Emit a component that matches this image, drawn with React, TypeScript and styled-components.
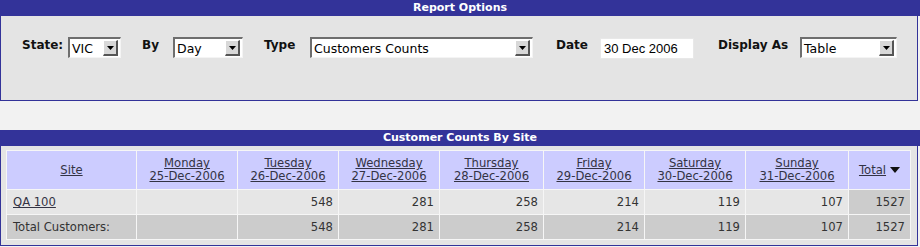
import React from "react";
import styled, { createGlobalStyle } from "styled-components";

const GlobalStyle = createGlobalStyle`
  body {
    margin: 0;
    background: #f2f2f2;
    font-family: "DejaVu Sans", Verdana, sans-serif;
  }
`;

const TitleBar = styled.div`
  width: 920px;
  height: 16px;
  background: #333399;
  color: #ffffff;
  font-weight: bold;
  font-size: 11px;
  line-height: 16px;
  text-align: center;
`;

const Panel = styled.div<{ $pad: string; $height?: number }>`
  width: 918px;
  box-sizing: border-box;
  background: #e4e4e4;
  border: 1px solid #333399;
  border-top: none;
  padding: ${({ $pad }) => $pad};
  height: ${({ $height }) => ($height ? `${$height}px` : "auto")};
`;

const Spacer = styled.div`
  height: 29px;
`;

const Controls = styled.div`
  display: flex;
  align-items: flex-start;
`;

const Field = styled.div<{ $after: number }>`
  display: flex;
  align-items: flex-start;
  margin-right: ${({ $after }) => $after}px;
`;

const Label = styled.span<{ $w: number }>`
  width: ${({ $w }) => $w}px;
  flex: none;
  font-weight: bold;
  font-size: 12px;
  line-height: 14px;
  color: #111;
  padding-top: 1px;
  white-space: nowrap;
`;

const SelectBox = styled.div<{ $width: number }>`
  width: ${({ $width }) => $width}px;
  height: 21px;
  box-sizing: border-box;
  display: flex;
  align-items: center;
  justify-content: space-between;
  background: #ffffff;
  border-top: 2px solid #6e6e6e;
  border-left: 2px solid #6e6e6e;
  border-right: 1px solid #f4f4f4;
  border-bottom: 1px solid #f4f4f4;
  padding: 0 2px 0 2px;
  font-size: 12.5px;
  color: #000;
`;

const DropButton = styled.span`
  width: 15px;
  height: 16px;
  box-sizing: border-box;
  background: #d8d8d8;
  border-top: 1px solid #ffffff;
  border-left: 1px solid #ffffff;
  border-right: 2px solid #555555;
  border-bottom: 2px solid #555555;
  display: flex;
  align-items: center;
  justify-content: center;
`;

const DateInput = styled.div`
  width: 94px;
  height: 21px;
  box-sizing: border-box;
  margin-top: 1px;
  background: #ffffff;
  border: 1px solid #e8e8e8;
  padding-left: 3px;
  font-family: "Liberation Sans", Arial, sans-serif;
  font-size: 13px;
  line-height: 20px;
  color: #000;
`;

const Arrow = () => (
  <svg width="7" height="4" viewBox="0 0 7 4">
    <path d="M0 0 H7 L3.5 4 Z" fill="#000" />
  </svg>
);

const Select: React.FC<{ value: string; width: number }> = ({
  value,
  width,
}) => (
  <SelectBox $width={width}>
    <span>{value}</span>
    <DropButton>
      <Arrow />
    </DropButton>
  </SelectBox>
);

const Grid = styled.table`
  border-collapse: separate;
  border-spacing: 1px;
  background: #f6f6f6;
  table-layout: fixed;
  font-size: 11.6px;
  color: #333;
`;

const HeadCell = styled.th<{ $w: number }>`
  width: ${({ $w }) => $w}px;
  box-sizing: border-box;
  height: 38px;
  padding: 0 2px;
  background: #ccccff;
  font-weight: normal;
  text-align: center;
  line-height: 13px;
  color: #333344;
`;

const Link = styled.span`
  text-decoration: underline;
  color: #333344;
`;

const Cell = styled.td<{ $shade: boolean; $left?: boolean }>`
  height: 24px;
  box-sizing: border-box;
  padding: 0 5px 0 6px;
  background: ${({ $shade }) => ($shade ? "#cccccc" : "#e6e6e6")};
  text-align: ${({ $left }) => ($left ? "left" : "right")};
  color: #333;
  white-space: nowrap;
`;

const SortIcon = () => (
  <svg width="10" height="7" viewBox="0 0 10 7" style={{ marginLeft: 4 }}>
    <path d="M0 0 H10 L5 6 Z" fill="#111" />
  </svg>
);

const days = [
  { day: "Monday", date: "25-Dec-2006", w: 100, a: "", b: "" },
  { day: "Tuesday", date: "26-Dec-2006", w: 100, a: "548", b: "548" },
  { day: "Wednesday", date: "27-Dec-2006", w: 100, a: "281", b: "281" },
  { day: "Thursday", date: "28-Dec-2006", w: 103, a: "258", b: "258" },
  { day: "Friday", date: "29-Dec-2006", w: 100, a: "214", b: "214" },
  { day: "Saturday", date: "30-Dec-2006", w: 100, a: "119", b: "119" },
  { day: "Sunday", date: "31-Dec-2006", w: 102, a: "107", b: "107" },
];

export default function App() {
  return (
    <>
      <GlobalStyle />
      <TitleBar>Report Options</TitleBar>
      <Panel $pad="21px 0 0 21px" $height={85}>
        <Controls>
          <Field $after={21}>
            <Label $w={46}>State:</Label>
            <Select value="VIC" width={53} />
          </Field>
          <Field $after={21}>
            <Label $w={31}>By</Label>
            <Select value="Day" width={70} />
          </Field>
          <Field $after={23}>
            <Label $w={46}>Type</Label>
            <Select value="Customers Counts" width={223} />
          </Field>
          <Field $after={24}>
            <Label $w={44}>Date</Label>
            <DateInput>30 Dec 2006</DateInput>
          </Field>
          <Field $after={0}>
            <Label $w={82}>Display As</Label>
            <Select value="Table" width={97} />
          </Field>
        </Controls>
      </Panel>
      <Spacer />
      <TitleBar>Customer Counts By Site</TitleBar>
      <Panel $pad="4px 5px 5px 5px">
        <Grid>
          <thead>
            <tr>
              <HeadCell $w={129}>
                <Link>Site</Link>
              </HeadCell>
              {days.map((d) => (
                <HeadCell key={d.day} $w={d.w}>
                  <Link>
                    {d.day}
                    <br />
                    {d.date}
                  </Link>
                </HeadCell>
              ))}
              <HeadCell $w={61}>
                <Link>Total</Link>
                <SortIcon />
              </HeadCell>
            </tr>
          </thead>
          <tbody>
            <tr>
              <Cell $shade={false} $left>
                <Link>QA 100</Link>
              </Cell>
              {days.map((d) => (
                <Cell key={d.day} $shade={false}>
                  {d.a}
                </Cell>
              ))}
              <Cell $shade>1527</Cell>
            </tr>
            <tr>
              <Cell $shade $left>
                Total Customers:
              </Cell>
              {days.map((d) => (
                <Cell key={d.day} $shade>
                  {d.b}
                </Cell>
              ))}
              <Cell $shade>1527</Cell>
            </tr>
          </tbody>
        </Grid>
      </Panel>
    </>
  );
}
